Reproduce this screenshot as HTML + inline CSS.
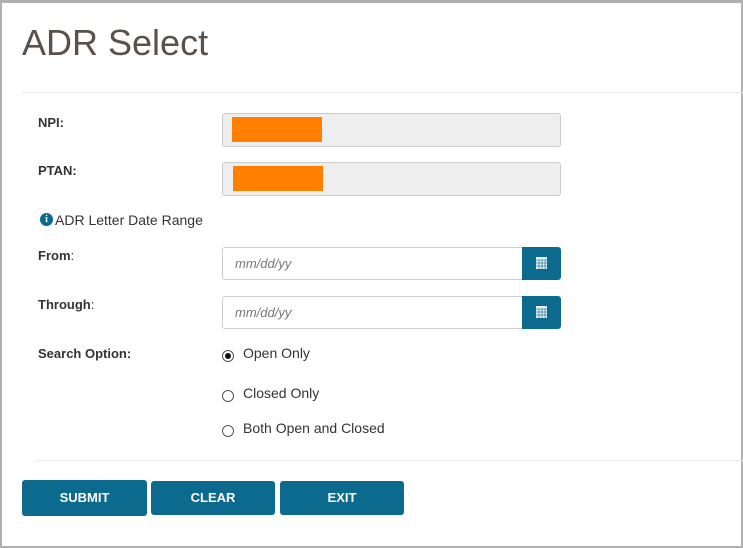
<!DOCTYPE html>
<html><head><style>
html,body{margin:0;padding:0}
body{width:743px;height:548px;position:relative;overflow:hidden;background:#fff;font-family:"Liberation Sans",Arial,sans-serif;}
.frame{position:absolute;left:0;top:0;width:739px;height:543px;border:2px solid #b0b0b0;border-top-width:3px;}
.a{position:absolute}
.t{font-size:36px;color:#5b514b;left:22px;top:22px}
.hr{height:1px;background:#e8e8e8}
.lbl{font-size:13px;font-weight:bold;color:#333;left:38px}
.ro{left:222px;width:337px;height:32px;background:#eee;border:1px solid #ccc;border-radius:3px}
.or{background:#ff7f00}
.in{left:222px;border:1px solid #ccc;border-radius:3px 0 0 3px;font-style:italic;color:#777;font-size:13px;line-height:31px;padding-left:12px;box-sizing:border-box;width:301px;height:33px}
.cb{left:522px;width:39px;height:33px;background:#0b6a8e;border-radius:0 3px 3px 0}
.r{width:12px;height:12px;border:1px solid #555;border-radius:50%;left:222px;box-sizing:border-box}
.rl{font-size:14px;color:#333;left:243px}
.b{background:#0d6a8f;color:#fff;font-weight:bold;font-size:13px;text-align:center;border-radius:3px;height:34px;line-height:34px;top:481px}
</style></head><body>
<div class="frame"></div>
<div class="a t">ADR Select</div>
<div class="a hr" style="left:22px;top:92px;width:721px"></div>
<div class="a lbl" style="top:115px">NPI:</div>
<div class="a ro" style="top:113px"></div>
<div class="a or" style="left:232px;top:117px;width:90px;height:25px"></div>
<div class="a lbl" style="top:163px">PTAN:</div>
<div class="a ro" style="top:162px"></div>
<div class="a or" style="left:233px;top:166px;width:90px;height:25px"></div>
<div class="a" style="left:40px;top:213px;width:13px;height:13px;border-radius:50%;background:#0b6a8e;color:#fff;font-size:10px;font-weight:bold;text-align:center;line-height:13px;font-family:'Liberation Serif',serif">i</div>
<div class="a" style="left:55px;top:212px;font-size:14px;color:#333">ADR Letter Date Range</div>
<div class="a lbl" style="top:248px">From<span style="font-weight:normal">:</span></div>
<div class="a in" style="top:247px">mm/dd/yy</div>
<div class="a cb" style="top:247px"><svg width="39" height="33"><rect x="14" y="10" width="11" height="12" fill="#fff" opacity=".9"/><g stroke="#0b6a8e" stroke-width="0.6"><line x1="14" y1="13" x2="25" y2="13"/><line x1="14" y1="16" x2="25" y2="16"/><line x1="14" y1="19" x2="25" y2="19"/><line x1="17" y1="13" x2="17" y2="22"/><line x1="20" y1="13" x2="20" y2="22"/><line x1="23" y1="13" x2="23" y2="22"/></g></svg></div>
<div class="a lbl" style="top:297px">Through<span style="font-weight:normal">:</span></div>
<div class="a in" style="top:296px">mm/dd/yy</div>
<div class="a cb" style="top:296px"><svg width="39" height="33"><rect x="14" y="10" width="11" height="12" fill="#fff" opacity=".9"/><g stroke="#0b6a8e" stroke-width="0.6"><line x1="14" y1="13" x2="25" y2="13"/><line x1="14" y1="16" x2="25" y2="16"/><line x1="14" y1="19" x2="25" y2="19"/><line x1="17" y1="13" x2="17" y2="22"/><line x1="20" y1="13" x2="20" y2="22"/><line x1="23" y1="13" x2="23" y2="22"/></g></svg></div>
<div class="a lbl" style="top:346px">Search Option:</div>
<div class="a r" style="top:350px"><div style="width:6px;height:6px;background:#111;border-radius:50%;margin:2px"></div></div>
<div class="a rl" style="top:345px">Open Only</div>
<div class="a r" style="top:390px"></div>
<div class="a rl" style="top:385px">Closed Only</div>
<div class="a r" style="top:425px"></div>
<div class="a rl" style="top:420px">Both Open and Closed</div>
<div class="a hr" style="left:36px;top:460px;width:707px"></div>
<div class="a b" style="left:22px;width:125px;top:480px;height:36px;line-height:36px">SUBMIT</div>
<div class="a b" style="left:151px;width:124px">CLEAR</div>
<div class="a b" style="left:280px;width:124px">EXIT</div>
</body></html>
